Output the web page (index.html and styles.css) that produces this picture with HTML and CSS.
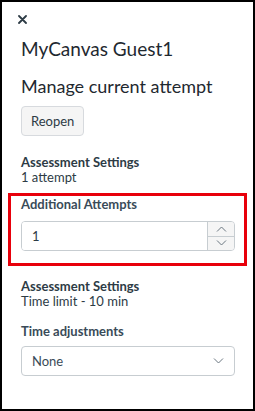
FILE: index.html
```html
<!DOCTYPE html>
<html>
<head>
  <title>Manage current attempt</title>
  <link rel="stylesheet" href="styles.css">
</head>
<body>
  <div class="tray">
    <button class="close-btn" aria-label="Close">
      <svg width="9" height="9" viewBox="0 0 9 9">
        <path d="M1 1 L8 8 M8 1 L1 8" stroke="#2d3b45" stroke-width="1.8" stroke-linecap="round"/>
      </svg>
    </button>

    <h1 class="student-name">MyCanvas Guest1</h1>
    <h2 class="section-title">Manage current attempt</h2>

    <button class="btn">Reopen</button>

    <div class="setting">
      <div class="setting-label">Assessment Settings</div>
      <div class="setting-value">1 attempt</div>
    </div>

    <div class="highlight">
      <label class="field-label" for="extraAttempts">Additional Attempts</label>
      <div class="number-input">
        <input type="text" id="extraAttempts" value="1">
        <div class="spinner">
          <span class="spin-btn">
            <svg width="11" height="6" viewBox="0 0 11 6"><path d="M1 5.5 L5.5 1 L10 5.5" fill="none" stroke="#6b7780" stroke-width="1"/></svg>
          </span>
          <span class="spin-btn">
            <svg width="11" height="6" viewBox="0 0 11 6"><path d="M1 0.5 L5.5 5 L10 0.5" fill="none" stroke="#6b7780" stroke-width="1"/></svg>
          </span>
        </div>
      </div>
    </div>

    <div class="setting setting-time">
      <div class="setting-label">Assessment Settings</div>
      <div class="setting-value">Time limit - 10 min</div>
    </div>

    <label class="field-label" for="timeAdjust">Time adjustments</label>
    <div class="select">
      <span class="select-value" id="timeAdjust">None</span>
      <svg width="11" height="6" viewBox="0 0 11 6"><path d="M1 0.5 L5.5 5 L10 0.5" fill="none" stroke="#6b7780" stroke-width="1"/></svg>
    </div>
  </div>
</body>
</html>
```

FILE: styles.css
```css
body {
  margin: 0;
  font-family: 'Lato', sans-serif;
  color: #2d3b45;
  background-color: white;
}

.tray {
  height: 411px;
  box-sizing: border-box;
  border: 2px solid #000;
  padding: 11px 18px 0 19px;
}

.close-btn {
  display: flex;
  align-items: center;
  justify-content: center;
  width: 12px;
  height: 12px;
  margin-left: -5px;
  padding: 0;
  border: none;
  background: none;
  cursor: pointer;
}

.student-name {
  font-size: 19px;
  font-weight: 400;
  line-height: 22px;
  color: #1f2930;
  margin: 13px 0 0 0;
}

.section-title {
  font-size: 18px;
  font-weight: 400;
  line-height: 22px;
  color: #1f2930;
  margin: 15px 0 0 0;
}

.btn {
  display: block;
  margin-top: 9px;
  height: 30px;
  padding: 0 9px;
  font-family: 'Lato', sans-serif;
  font-size: 13px;
  color: #2d3b45;
  background-color: #f5f5f5;
  border: 1px solid #d7dade;
  border-radius: 4px;
}

.setting {
  margin-top: 19px;
  font-size: 13px;
  line-height: 15px;
}

.setting-label {
  font-weight: 700;
}

.highlight {
  margin: 8px -12px 0 -13px;
  border: 3px solid #e8000b;
  padding: 0 9px 12px 10px;
}

.field-label {
  display: block;
  font-size: 13px;
  font-weight: 700;
  line-height: 16px;
  color: #394b58;
  margin-bottom: 9px;
}

.number-input {
  display: flex;
  height: 30px;
  box-sizing: border-box;
  border: 1px solid #c7cdd1;
  border-radius: 4px;
  overflow: hidden;
}

.number-input input {
  flex: 1;
  min-width: 0;
  border: none;
  outline: none;
  padding: 0 10px;
  font-family: 'Lato', sans-serif;
  font-size: 13px;
  color: #2d3b45;
}

.spinner {
  width: 26px;
  display: flex;
  flex-direction: column;
  border-left: 1px solid #c7cdd1;
}

.spin-btn {
  flex: 1;
  display: flex;
  align-items: center;
  justify-content: center;
  background-color: #f5f5f5;
}

.spin-btn + .spin-btn {
  border-top: 1px solid #c7cdd1;
}

.setting-time {
  margin-top: 13px;
}

.setting-time + .field-label {
  margin-top: 14px;
  margin-bottom: 7px;
}

.select {
  display: flex;
  align-items: center;
  justify-content: space-between;
  height: 30px;
  box-sizing: border-box;
  padding: 0 10px 0 10px;
  border: 1px solid #c7cdd1;
  border-radius: 4px;
  font-size: 13px;
  color: #394b58;
}
```
